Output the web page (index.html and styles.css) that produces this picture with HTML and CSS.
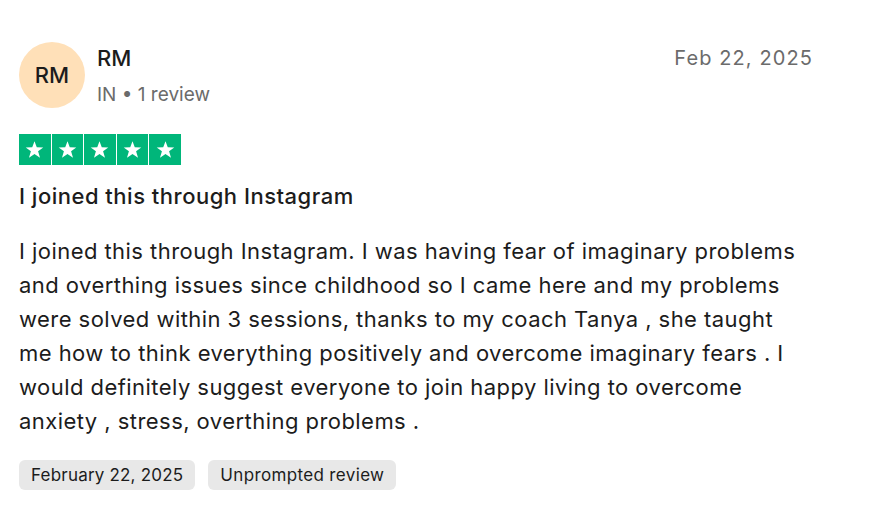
FILE: index.html
```html
<!DOCTYPE html>
<html>
<head>
<meta charset="utf-8">
<link rel="stylesheet" href="styles.css">
</head>
<body>
<article class="review">
  <header class="head">
    <div class="avatar">RM</div>
    <div class="who">
      <div class="name">RM</div>
      <div class="meta">IN • 1 review</div>
    </div>
    <div class="date">Feb 22, 2025</div>
  </header>
  <div class="stars">
    <span class="star"><svg viewBox="0 0 24 24"><path d="M12 2.5l2.6 7 7.4.1-5.9 4.5 2.2 7.2L12 17l-6.3 4.3 2.2-7.2L2 9.6l7.4-.1z"/></svg></span>
    <span class="star"><svg viewBox="0 0 24 24"><path d="M12 2.5l2.6 7 7.4.1-5.9 4.5 2.2 7.2L12 17l-6.3 4.3 2.2-7.2L2 9.6l7.4-.1z"/></svg></span>
    <span class="star"><svg viewBox="0 0 24 24"><path d="M12 2.5l2.6 7 7.4.1-5.9 4.5 2.2 7.2L12 17l-6.3 4.3 2.2-7.2L2 9.6l7.4-.1z"/></svg></span>
    <span class="star"><svg viewBox="0 0 24 24"><path d="M12 2.5l2.6 7 7.4.1-5.9 4.5 2.2 7.2L12 17l-6.3 4.3 2.2-7.2L2 9.6l7.4-.1z"/></svg></span>
    <span class="star"><svg viewBox="0 0 24 24"><path d="M12 2.5l2.6 7 7.4.1-5.9 4.5 2.2 7.2L12 17l-6.3 4.3 2.2-7.2L2 9.6l7.4-.1z"/></svg></span>
  </div>
  <h2 class="title">I joined this through Instagram</h2>
  <p class="body">I joined this through Instagram. I was having fear of imaginary problems and overthing issues since childhood so I came here and my problems were solved within 3 sessions, thanks to my coach Tanya , she taught me how to think everything positively and overcome imaginary fears . I would definitely suggest everyone to join happy living to overcome anxiety , stress, overthing problems .</p>
  <div class="tags">
    <span class="tag">February 22, 2025</span>
    <span class="tag">Unprompted review</span>
  </div>
</article>
</body>
</html>
```
FILE: styles.css
```css
html, body {
  margin: 0;
  padding: 0;
  background: #ffffff;
}
body {
  font-family: Inter, "Liberation Sans", sans-serif;
  color: #1c1c1c;
}
.review {
  width: 788px;
  padding: 42px 0 0 19px;
}
.head {
  display: flex;
  align-items: flex-start;
}
.avatar {
  width: 66px;
  height: 66px;
  border-radius: 50%;
  background: #ffe0b8;
  display: flex;
  align-items: center;
  justify-content: center;
  font-size: 22px;
  font-weight: 500;
  color: #1c1c1c;
  flex: none;
}
.who {
  margin-left: 12px;
  padding-top: 1px;
  flex: 1;
}
.name {
  font-size: 22px;
  font-weight: 500;
  line-height: 30px;
}
.meta {
  margin-top: 8px;
  font-size: 19px;
  color: #6b6b6b;
  line-height: 28px;
}
.date {
  padding-top: 1px;
  margin-right: -6px;
  font-size: 20px;
  letter-spacing: 1.1px;
  color: #6b6b6b;
  line-height: 30px;
}
.stars {
  display: flex;
  gap: 1px;
  margin-top: 25px;
}
.star {
  width: 31.6px;
  height: 31px;
  background: #00b67a;
  display: flex;
  align-items: center;
  justify-content: center;
}
.star svg {
  width: 21px;
  height: 21px;
  fill: #ffffff;
}
.title {
  margin: 16px 0 0;
  font-size: 22px;
  font-weight: 500;
  letter-spacing: 0.5px;
  line-height: 30px;
}
.body {
  margin: 23px 0 0;
  font-size: 22px;
  letter-spacing: 0.45px;
  line-height: 34px;
  color: #1c1c1c;
}
.tags {
  display: flex;
  gap: 13px;
  margin-top: 22px;
}
.tag {
  background: #e8e8e8;
  border-radius: 6px;
  padding: 0 12px;
  height: 30px;
  display: flex;
  align-items: center;
  font-size: 17px;
  letter-spacing: 0.2px;
  color: #1c1c1c;
}
.tag + .tag {
  letter-spacing: 0.35px;
}
```
